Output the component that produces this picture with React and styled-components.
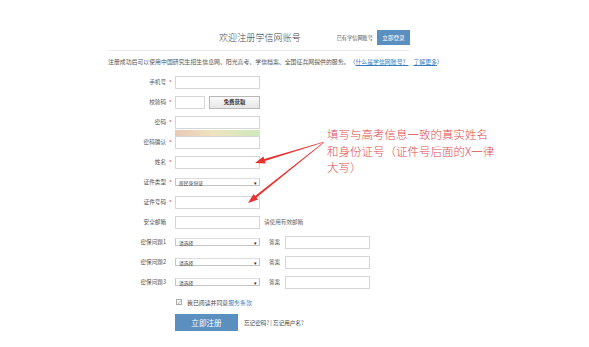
import styled, { createGlobalStyle } from "styled-components";

const GlobalStyle = createGlobalStyle`
  html, body {
    margin: 0;
    padding: 0;
    background: #fff;
  }
  body {
    font-family: "Noto Sans CJK SC", "Noto Sans", sans-serif;
    color: #555;
  }
`;

const Page = styled.div`
  position: relative;
  width: 589px;
  height: 347px;
  overflow: hidden;
`;

const Container = styled.div`
  width: 302px;
  margin-left: 108px;
  padding-top: 30px;
`;

const Header = styled.div`
  display: flex;
  align-items: center;
  height: 15px;
  padding-left: 111px;
`;

const Title = styled.div`
  font-size: 9px;
  letter-spacing: 0.1px;
  color: #444;
  font-weight: 300;
  line-height: 15px;
`;

const HasAccount = styled.div`
  margin-left: auto;
  font-size: 5.2px;
  color: #555;
`;

const LoginButton = styled.div`
  margin-left: 4px;
  width: 33px;
  height: 15px;
  background: #5b8fc0;
  color: #fff;
  font-size: 5.6px;
  display: flex;
  align-items: center;
  justify-content: center;
`;

const Divider = styled.div`
  height: 1px;
  background: #ececec;
  margin-top: 5px;
`;

const Intro = styled.div`
  font-size: 5.9px;
  line-height: 10px;
  margin-top: 6px;
  margin-bottom: 5px;
  white-space: nowrap;
  color: #555;
`;

const Link = styled.a`
  color: #3b7cc0;
  text-decoration: ${(p) => (p.$underline ? "underline" : "none")};
  margin-left: ${(p) => p.$gap || 0}px;
`;

const Row = styled.div`
  position: relative;
  display: flex;
  align-items: center;
  height: 20px;
`;

const Label = styled.div`
  width: 58px;
  text-align: right;
  font-size: 5.6px;
  color: #555;
`;

const Star = styled.span`
  width: 9px;
  text-align: center;
  color: #e05050;
  font-size: 6px;
  line-height: 6px;
  padding-top: 2px;
`;

const Input = styled.div`
  box-sizing: border-box;
  width: ${(p) => p.$w || 85}px;
  height: 13px;
  border: 1px solid #d6d6d6;
  background: #fff;
  margin-left: ${(p) => p.$ml || 0}px;
`;

const FieldWrap = styled.div`
  position: relative;
`;

const Strength = styled.div`
  position: absolute;
  left: 0;
  top: 14px;
  width: 85px;
  height: 6px;
  background: linear-gradient(90deg, #e9c9b7 0%, #eee3bf 45%, #cfe9bd 100%);
`;

const CodeButton = styled.div`
  box-sizing: border-box;
  margin-left: 4px;
  width: 51px;
  height: 13px;
  border: 1px solid #b9b9b9;
  background: linear-gradient(#fafafa, #e6e6e6);
  font-size: 5.4px;
  font-weight: 700;
  color: #333;
  display: flex;
  align-items: center;
  justify-content: center;
`;

const Select = styled.div`
  box-sizing: border-box;
  width: 85px;
  height: 8px;
  border: 1px solid #c4c4c4;
  border-top-color: #ddd;
  display: flex;
  align-items: center;
  padding: 0 2px 0 3px;
  font-size: 4.8px;
  color: #333;
  &::after {
    content: "▾";
    margin-left: auto;
    font-size: 5px;
    color: #222;
  }
`;

const Hint = styled.div`
  margin-left: 4px;
  font-size: 5.6px;
  color: #666;
`;

const AnswerLabel = styled.div`
  margin-left: 9px;
  font-size: 5.6px;
  color: #555;
`;

const AgreeRow = styled.div`
  display: flex;
  align-items: center;
  height: 20px;
  padding-left: 68px;
  font-size: 5.9px;
  color: #444;
`;

const Check = styled.span`
  box-sizing: border-box;
  width: 6px;
  height: 6px;
  border: 1px solid #aaa;
  margin-right: 5px;
  display: flex;
  align-items: center;
  justify-content: center;
  font-size: 4.5px;
  color: #557;
  line-height: 1;
`;

const Actions = styled.div`
  display: flex;
  align-items: center;
  padding-left: 67px;
  margin-top: 2px;
`;

const RegisterButton = styled.div`
  width: 63px;
  height: 17px;
  background: #5b8fc0;
  color: #fff;
  font-size: 7.6px;
  display: flex;
  align-items: center;
  justify-content: center;
`;

const Forgot = styled.div`
  margin-left: 6px;
  font-size: 5.6px;
  color: #444;
`;

const Callout = styled.div`
  position: absolute;
  left: 327px;
  top: 126px;
  font-size: 11.5px;
  line-height: 16.5px;
  color: #e04a4e;
  white-space: nowrap;
  font-weight: 300;
`;

const Overlay = styled.svg`
  position: absolute;
  left: 0;
  top: 0;
  pointer-events: none;
`;

const arrowPoints = (x1, y1, x2, y2) => {
  const dx = x2 - x1;
  const dy = y2 - y1;
  const len = Math.hypot(dx, dy);
  const ux = dx / len;
  const uy = dy / len;
  const px = -uy;
  const py = ux;
  const headLen = 10;
  const headW = 3.6;
  const shaftW = 1.1;
  const bx = x2 - ux * headLen;
  const by = y2 - uy * headLen;
  const pts = [
    [x1 + px * 0.3, y1 + py * 0.3],
    [bx + px * shaftW, by + py * shaftW],
    [bx + px * headW, by + py * headW],
    [x2, y2],
    [bx - px * headW, by - py * headW],
    [bx - px * shaftW, by - py * shaftW],
    [x1 - px * 0.3, y1 - py * 0.3],
  ];
  return pts.map((p) => p.map((v) => v.toFixed(1)).join(",")).join(" ");
};

const Field = ({ label, required, children }) => (
  <Row>
    <Label>{label}</Label>
    <Star>{required ? "*" : ""}</Star>
    {children}
  </Row>
);

const questions = ["密保问题1", "密保问题2", "密保问题3"];

const App = () => {
  return (
    <Page>
      <GlobalStyle />
      <Container>
        <Header>
          <Title>欢迎注册学信网账号</Title>
          <HasAccount>已有学信网账号</HasAccount>
          <LoginButton>立即登录</LoginButton>
        </Header>
        <Divider />
        <Intro>
          注册成功后可以使用中国研究生招生信息网、阳光高考、学信档案、全国征兵网提供的服务。（
          <Link $underline>什么是学信网账号？</Link>
          <Link $underline $gap={5}>了解更多</Link>）
        </Intro>

        <Field label="手机号" required>
          <Input />
        </Field>
        <Field label="校验码" required>
          <Input $w={30} />
          <CodeButton>免费获取</CodeButton>
        </Field>
        <Field label="密码" required>
          <FieldWrap>
            <Input />
            <Strength />
          </FieldWrap>
        </Field>
        <Field label="密码确认" required>
          <Input />
        </Field>
        <Field label="姓名" required>
          <Input />
        </Field>
        <Field label="证件类型" required>
          <Select>居民身份证</Select>
        </Field>
        <Field label="证件号码" required>
          <Input />
        </Field>
        <Field label="安全邮箱">
          <Input />
          <Hint>请使用有效邮箱</Hint>
        </Field>
        {questions.map((q) => (
          <Field label={q} key={q}>
            <Select>请选择</Select>
            <AnswerLabel>答案</AnswerLabel>
            <Input $ml={5} />
          </Field>
        ))}

        <AgreeRow>
          <Check>✓</Check>
          我已阅读并同意<Link>服务条款</Link>
        </AgreeRow>
        <Actions>
          <RegisterButton>立即注册</RegisterButton>
          <Forgot>忘记密码? | 忘记用户名?</Forgot>
        </Actions>
      </Container>

      <Callout>
        填写与高考信息一致的真实姓名
        <br />
        和身份证号（证件号后面的X一律
        <br />
        大写）
      </Callout>
      <Overlay width="589" height="347">
        <polygon points={arrowPoints(324, 142, 255, 163)} fill="#e8302c" />
        <polygon points={arrowPoints(323, 143, 248, 203)} fill="#e8302c" />
      </Overlay>
    </Page>
  );
};

export default App;
